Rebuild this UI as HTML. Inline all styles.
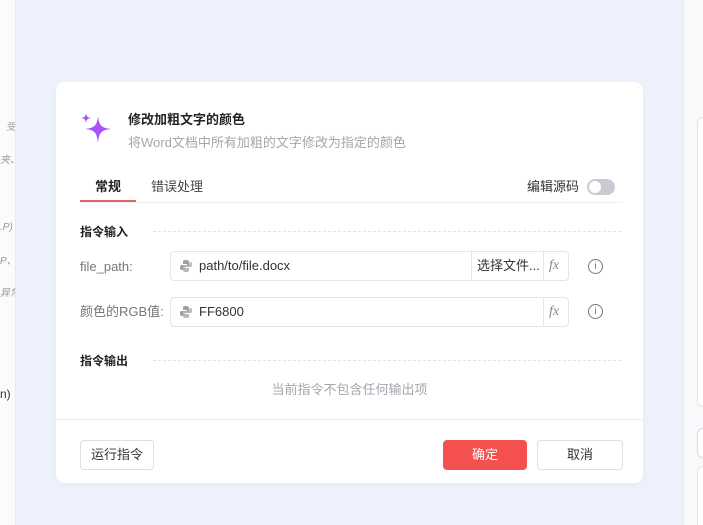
<!DOCTYPE html>
<html><head><meta charset="utf-8"><style>
*{box-sizing:border-box;margin:0;padding:0}
html,body{width:703px;height:525px;overflow:hidden}
body{background:#eef2fc;font-family:"Liberation Sans","Noto Sans CJK SC",sans-serif;font-size:13px;line-height:16px;color:#333;position:relative}
.a{position:absolute;white-space:nowrap}
.left{left:0;top:0;width:16px;height:525px;background:#fafbfd;border-right:1px solid #e8eaf0;overflow:hidden;color:#999;font-size:10px;font-style:italic}
.right{left:683px;top:0;width:20px;height:525px;background:#f9f9fb;border-left:1px solid #e6e8ee;overflow:hidden}
.dlg{left:56px;top:82px;width:587px;height:401px;background:#fff;border-radius:8px;box-shadow:0 2px 10px rgba(0,0,0,.04)}
.in{border:1px solid #e3e5ea;border-radius:4px;height:30px;background:#fff}
.btn{border:1px solid #dcdfe6;border-radius:4px;background:#fff;text-align:center;line-height:28px;font-size:13px;color:#333}
.dash{border-top:1px dashed #e3e5ea;height:0}
.g{color:#777}
</style></head><body>
<div class="a left">
<div class="a" style="left:6px;top:120px">受</div>
<div class="a" style="left:0;top:153px">夹、</div>
<div class="a" style="left:0;top:220px">.P)</div>
<div class="a" style="left:0;top:254px">P、</div>
<div class="a" style="left:0;top:286px">异常</div>
<div class="a" style="left:0;top:386px;font-style:normal;color:#333;font-size:12px">n)</div>
</div>
<div class="a right">
<div class="a" style="left:13px;top:117px;width:20px;height:290px;border:1px solid #e3e5ea;border-radius:6px;background:#fff"></div>
<div class="a" style="left:13px;top:428px;width:20px;height:30px;border:1px solid #d8dbe2;border-radius:6px;background:#fff"></div>
<div class="a" style="left:13px;top:466px;width:20px;height:70px;border:1px solid #e3e5ea;border-radius:6px;background:#fff"></div>
</div>
<div class="a dlg">
<svg class="a" style="left:24px;top:30px" width="34" height="34" viewBox="0 0 34 34">
<path d="M18 4 C19 13 21 16 31 17 C21 18 19 21 18 31 C17 21 15 18 5 17 C15 16 17 13 18 4Z" fill="#a855f7"/>
<path d="M6 1 C6.5 4.5 7.5 5.5 11 6 C7.5 6.5 6.5 7.5 6 11 C5.5 7.5 4.5 6.5 1 6 C4.5 5.5 5.5 4.5 6 1Z" fill="#a855f7"/>
</svg>
<div class="a" style="left:72px;top:30px;font-size:13px;font-weight:bold;color:#222">修改加粗文字的颜色</div>
<div class="a" style="left:72px;top:53px;font-size:13px;color:#a3a6ad">将Word文档中所有加粗的文字修改为指定的颜色</div>
<div class="a" style="left:39px;top:97px;font-size:13px;font-weight:bold;color:#222">常规</div>
<div class="a" style="left:95px;top:97px;font-size:13px;color:#444">错误处理</div>
<div class="a" style="left:24px;top:118px;width:56px;height:2px;background:#e06666"></div>
<div class="a" style="left:24px;top:120px;width:542px;height:1px;background:#eceef2"></div>
<div class="a" style="left:471px;top:97px;font-size:13px;color:#333">编辑源码</div>
<div class="a" style="left:531px;top:97px;width:28px;height:16px;border-radius:8px;background:#c8cbd1"><div class="a" style="left:2px;top:2px;width:12px;height:12px;border-radius:6px;background:#fff"></div></div>
<div class="a" style="left:24px;top:142px;font-size:12px;font-weight:bold;color:#222">指令输入</div>
<div class="a dash" style="left:97px;top:149px;width:468px"></div>
<div class="a g" style="left:24px;top:177px">file_path:</div>
<div class="a in" style="left:114px;top:169px;width:399px">
<svg class="a" style="left:8px;top:7px" width="14" height="14" viewBox="0 0 14 14"><path d="M7 1C4 1 4 2 4 3V5H8V6H2.5C1 6 1 8 1 8.5S1 11 2.5 11H4V9C4 8 5 7.5 6 7.5H9C10 7.5 10 7 10 6V3C10 2 9 1 7 1Z" fill="#a0a0a0"/><path d="M7 13C10 13 10 12 10 11V9H6V8H11.5C13 8 13 6 13 5.5S13 3 11.5 3H10.5V5C10.5 6 9.5 6.5 8.5 6.5H5C4 6.5 4 7 4 8V11C4 12 5 13 7 13Z" fill="#b8b8b8"/></svg>
<span class="a" style="left:28px;top:6px;color:#333">path/to/file.docx</span>
<div class="a" style="left:300px;top:0;width:1px;height:28px;background:#e3e5ea"></div>
<span class="a" style="left:306px;top:6px;color:#333">选择文件...</span>
<div class="a" style="left:372px;top:0;width:1px;height:28px;background:#e3e5ea"></div>
<span class="a" style="left:378px;top:6px;color:#888;font-style:italic;font-family:'Liberation Serif',serif;font-size:14px">fx</span>
</div>
<div class="a" style="left:532px;top:177px;width:15px;height:15px;border:1px solid #777;border-radius:50%;font-size:10px;line-height:13px;text-align:center;color:#777">i</div>
<div class="a g" style="left:24px;top:222px">颜色的RGB值:</div>
<div class="a in" style="left:114px;top:215px;width:399px">
<svg class="a" style="left:8px;top:7px" width="14" height="14" viewBox="0 0 14 14"><path d="M7 1C4 1 4 2 4 3V5H8V6H2.5C1 6 1 8 1 8.5S1 11 2.5 11H4V9C4 8 5 7.5 6 7.5H9C10 7.5 10 7 10 6V3C10 2 9 1 7 1Z" fill="#a0a0a0"/><path d="M7 13C10 13 10 12 10 11V9H6V8H11.5C13 8 13 6 13 5.5S13 3 11.5 3H10.5V5C10.5 6 9.5 6.5 8.5 6.5H5C4 6.5 4 7 4 8V11C4 12 5 13 7 13Z" fill="#b8b8b8"/></svg>
<span class="a" style="left:28px;top:6px;color:#333">FF6800</span>
<div class="a" style="left:372px;top:0;width:1px;height:28px;background:#e3e5ea"></div>
<span class="a" style="left:378px;top:6px;color:#888;font-style:italic;font-family:'Liberation Serif',serif;font-size:14px">fx</span>
</div>
<div class="a" style="left:532px;top:222px;width:15px;height:15px;border:1px solid #777;border-radius:50%;font-size:10px;line-height:13px;text-align:center;color:#777">i</div>
<div class="a" style="left:24px;top:271px;font-size:12px;font-weight:bold;color:#222">指令输出</div>
<div class="a dash" style="left:97px;top:278px;width:468px"></div>
<div class="a" style="left:0;top:300px;width:587px;text-align:center;color:#a3a6ad">当前指令不包含任何输出项</div>
<div class="a" style="left:0;top:337px;width:587px;height:1px;background:#eceef2"></div>
<div class="a btn" style="left:24px;top:358px;width:74px;height:30px">运行指令</div>
<div class="a btn" style="left:387px;top:358px;width:84px;height:30px;background:#f55050;border-color:#f55050;color:#fff">确定</div>
<div class="a btn" style="left:481px;top:358px;width:86px;height:30px">取消</div>
</div>
</body></html>
